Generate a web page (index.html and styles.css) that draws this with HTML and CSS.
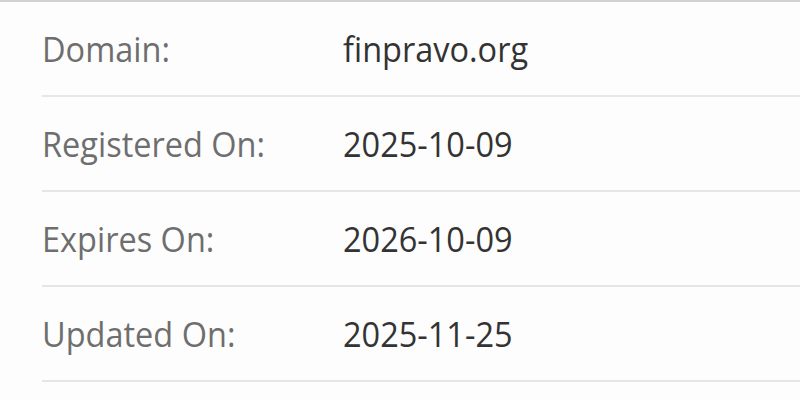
FILE: index.html
```html
<!DOCTYPE html>
<html>
<head>
<meta charset="utf-8">
<link rel="stylesheet" href="styles.css">
</head>
<body>
<div class="panel">
  <div class="table">
    <div class="row"><div class="label">Domain:</div><div class="value">finpravo.org</div></div>
    <div class="row"><div class="label">Registered On:</div><div class="value">2025-10-09</div></div>
    <div class="row"><div class="label">Expires On:</div><div class="value">2026-10-09</div></div>
    <div class="row"><div class="label">Updated On:</div><div class="value">2025-11-25</div></div>
  </div>
</div>
</body>
</html>
```
FILE: styles.css
```css
html, body {
  margin: 0;
  padding: 0;
  background: #fdfdfd;
}
body {
  font-family: "Open Sans", "Noto Sans", sans-serif;
  width: 800px;
  height: 400px;
  overflow: hidden;
}
.panel {
  border-top: 2px solid #d2d2d2;
  padding-left: 42px;
}
.row {
  display: grid;
  grid-template-columns: 301px 1fr;
  align-items: center;
  height: 93px;
  border-bottom: 2px solid #e6e6e6;
  font-size: 32.5px;
}
.label,
.value {
  transform: scaleY(1.09);
  transform-origin: left center;
}
.label {
  color: #6e6e6e;
}
.value {
  color: #333333;
}
```
